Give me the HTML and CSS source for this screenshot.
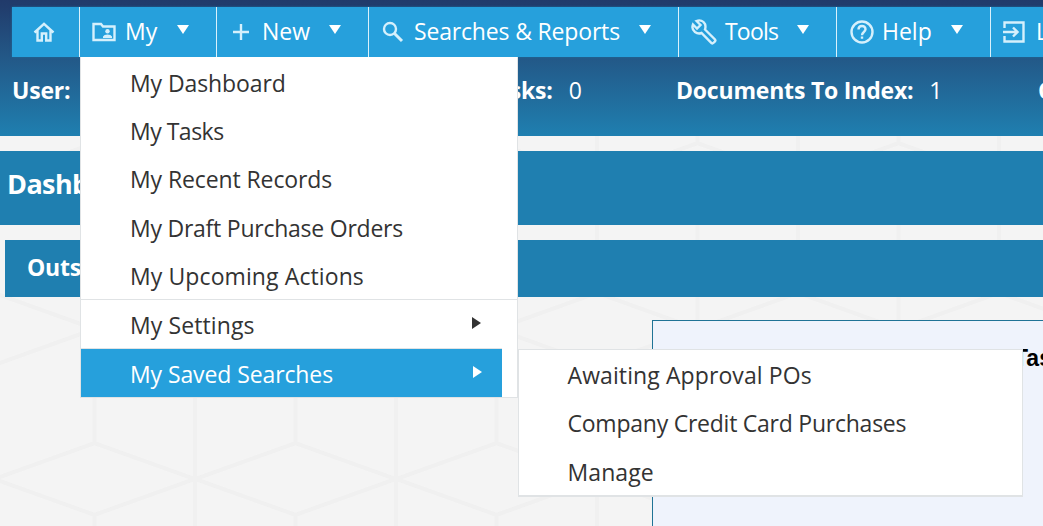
FILE: index.html
```
<!DOCTYPE html>
<html lang="en">
<head>
  <meta charset="UTF-8" />
  <meta name="viewport" content="width=device-width, initial-scale=1.0"/>
  <title>Dashboard</title>
  <link rel="stylesheet" href="styles.css">
</head>
<body>
  <!-- Cube pattern behind the page -->
  <svg class="backdrop" width="100%" height="100%">
    <defs>
      <pattern id="cubes" x="-6" y="29" width="201" height="300" patternUnits="userSpaceOnUse">
        <path d="M0 -36L100.500 0L201 -36M0 36L100.500 0L201 36M0 36V150M201 36V150M100.500 0V114M0 150L100.500 114L201 150L100.500 186ZM0 150V264M201 150V264M100.500 186V300M0 264L100.500 300L201 264"/>
      </pattern>
    </defs>
    <rect width="100%" height="100%" fill="url(#cubes)"/>
  </svg>

  <header class="header">
    <nav class="nav">
      <div class="nav-item home">
        <svg class="icon" width="22" height="20" viewBox="0 0 22 20"><path d="M1.500 10.500L11 1.800L20.500 10.500M4.500 8V18.500H8.800V11.500H13.200V18.500H17.500V8"/></svg>
      </div>
      <div class="nav-item my">
        <svg class="icon" width="24" height="20" viewBox="0 0 24 20"><path d="M1.500 2H9L11 4.500H22.500V18H1.500Z"/><circle class="solid" cx="15.500" cy="9.200" r="2.200"/><path class="solid" d="M11 16V14.500Q12 12.500 15.500 12.500T20 14.500V16Z"/></svg>
        <span class="label">My</span>
        <span class="caret"></span>

        <div class="menu">
          <div class="menu-item">My Dashboard</div>
          <div class="menu-item tighter">My Tasks</div>
          <div class="menu-item">My Recent Records</div>
          <div class="menu-item tight">My Draft Purchase Orders</div>
          <div class="menu-item wide">My Upcoming Actions</div>
          <div class="menu-item parent wide">My Settings<span class="arrow"></span></div>
          <div class="menu-item parent active">My Saved Searches<span class="arrow"></span></div>

          <div class="menu submenu">
            <div class="menu-item wide">Awaiting Approval POs</div>
            <div class="menu-item tight">Company Credit Card Purchases</div>
            <div class="menu-item wide">Manage</div>
          </div>
        </div>
      </div>
      <div class="nav-item new">
        <svg class="icon" width="18" height="18" viewBox="0 0 18 18"><path d="M9 1V17M1 9H17"/></svg>
        <span class="label">New</span>
        <span class="caret"></span>
      </div>
      <div class="nav-item searches">
        <svg class="icon" width="22" height="22" viewBox="0 0 22 22"><circle cx="8" cy="8" r="6"/><path class="thick" d="M12.500 12.500L20 20"/></svg>
        <span class="label">Searches &amp; Reports</span>
        <span class="caret"></span>
      </div>
      <div class="nav-item tools">
        <svg class="icon" width="26" height="26" viewBox="0 0 26 26"><path d="M2 5.500L6 9.500L9.500 6L5.500 2C9 .5 12.500 2 14 5C14.700 7 14.500 9 14 10.500L24 20.500Q24.800 21.500 24 22.300L22.300 24Q21.500 24.800 20.500 24L10.500 14C8.500 14.700 6 14.500 4 13C1.500 11 1 8 2 5.500Z"/></svg>
        <span class="label">Tools</span>
        <span class="caret"></span>
      </div>
      <div class="nav-item help">
        <svg class="icon" width="24" height="24" viewBox="0 0 24 24"><circle cx="12" cy="12" r="10.500"/><path d="M8.500 9.500C8.500 4.800 15.500 4.800 15.500 9.300C15.500 12 12 12 12 15.200M12 16.500V18.800"/></svg>
        <span class="label">Help</span>
        <span class="caret"></span>
      </div>
      <div class="nav-item logout">
        <svg class="icon" width="22" height="22" viewBox="0 0 22 22"><path d="M1.500 7V1.500H20.500V20.500H1.500V15M0 11H14M10 6.500L14.500 11L10 15.500"/></svg>
        <span class="label">Logout</span>
      </div>
    </nav>

    <div class="status">
      <div class="status-user"><b>User:</b></div>
      <div class="status-tasks"><b>Tasks:</b><span>0</span></div>
      <div class="status-docs"><b>Documents To Index:</b><span>1</span></div>
      <div class="status-more"><b>C</b></div>
    </div>
  </header>

  <h1 class="page-title">Dashboard</h1>
  <h2 class="section-title">Outstanding</h2>
  <div class="panel">Tasks</div>
</body>
</html>
```
FILE: styles.css
```
* {
  box-sizing: border-box;
}

body {
  margin: 0;
  height: 526px;
  overflow: hidden;
  display: flex;
  flex-direction: column;
  background-color: #f4f4f4;
  color: #fff;
  font-family: "Open Sans", "Noto Sans", sans-serif;
  font-size: 23px;
  white-space: nowrap;
}

.backdrop {
  position: absolute;
  top: 0;
  left: 0;
  z-index: -1;
}

.backdrop path {
  fill: none;
  stroke: #f0f0f0;
  stroke-width: 4;
}

.header {
  flex: none;
  height: 136px;
  padding: 7px 0 0 12px;
  background: linear-gradient(#213a6a 0, #213d6d 7px, #235887 57px, #1f7fb0 136px);
}

/* Menu bar */
.nav {
  display: flex;
  height: 50px;
  background-color: #26a0dc;
  box-shadow: 0 0 2px #1c6c9d;
}

.nav-item {
  position: relative;
  display: flex;
  flex: none;
  align-items: center;
  border-right: 1px solid #d9f1fc;
}

.home { width: 68px; padding-left: 21px; }
.my { width: 137px; padding-left: 12px; }
.new { width: 152px; padding-left: 15px; }
.searches { width: 310px; padding-left: 13px; }
.tools { width: 158px; padding-left: 12px; }
.help { width: 154px; padding-left: 13px; }

.logout {
  flex: 1;
  min-width: 0;
  padding-left: 12px;
  border-right: 0;
  overflow: hidden;
}

.icon {
  flex: none;
  fill: none;
  stroke: #d5f0fc;
  stroke-width: 2.4;
}

.icon .solid {
  fill: #d5f0fc;
  stroke: none;
}

.icon .thick {
  stroke-width: 3;
}

.label {
  line-height: 48px;
  margin-top: -2px;
}

.my .label { margin-left: 9px; }
.new .label { margin-left: 12px; }
.searches .label { margin-left: 10px; letter-spacing: -0.17px; }
.tools .label { margin-left: 8px; letter-spacing: -0.8px; }
.help .label { margin-left: 8px; }
.logout .label { margin-left: 11px; }

.caret {
  margin: -6px 27.5px 0 auto;
  border: 6px solid transparent;
  border-top: 9px solid #fff;
  border-bottom: 0;
}

/* Dropdowns */
.menu {
  position: absolute;
  top: 50px;
  left: 0;
  z-index: 2;
  width: 438px;
  padding-top: 1px;
  background-color: #fff;
  border: 1px solid #e0e3e5;
  border-top: 0;
  color: #333;
}

.menu-item {
  height: 48.2px;
  padding-left: 49px;
  line-height: 51px;
  letter-spacing: -0.1px;
}

.menu-item.tight { letter-spacing: -0.24px; }
.menu-item.tighter { letter-spacing: -0.5px; }
.menu-item.wide { letter-spacing: 0.1px; }

.menu-item.parent {
  display: flex;
  align-items: center;
  justify-content: space-between;
  height: 49px;
  padding-right: 36px;
  border-top: 1px solid #e0e3e5;
  line-height: 44px;
}

.menu-item.parent:not(.active) {
  padding-top: 3px;
}

.menu-item.active {
  width: 421px;
  padding-top: 3px;
  padding-right: 20px;
  background: #26a0dc;
  background-clip: padding-box;
  color: #fff;
}

.arrow {
  margin-top: -4px;
  border: 6px solid transparent;
  border-left: 9px solid currentColor;
  border-right: 0;
}

.submenu {
  top: 292px;
  left: 437px;
  width: 505px;
  padding: 0;
  border-top: 1px solid #e0e3e5;
  border-bottom: 2px solid #e0e3e5;
}

.submenu .menu-item {
  height: 48.3px;
  padding-left: 48.5px;
}

/* Status line */
.status {
  display: flex;
  overflow: hidden;
  line-height: 67px;
  letter-spacing: -0.2px;
}

.status div {
  flex: none;
}

.status span {
  margin-left: 16px;
}

.status .status-user { width: 471px; }
.status .status-tasks { width: 193px; }
.status .status-docs { width: 362px; }

/* Page body */
.page-title {
  flex: none;
  height: 74px;
  margin: 15px 0 0;
  padding-left: 7px;
  background-color: #1f7fb0;
  font-size: 27px;
  line-height: 66px;
  letter-spacing: -0.6px;
}

.section-title {
  flex: none;
  height: 57px;
  margin: 15px 0 0 5px;
  padding-left: 22px;
  background-color: #1f7fb0;
  font-size: 23px;
  line-height: 55px;
  letter-spacing: -0.2px;
}

.panel {
  flex: 1;
  margin: 23px 0 0 652px;
  padding: 24px 0 0 361px;
  overflow: hidden;
  background-color: #eff3fc;
  border: 1px solid #1f7396;
  border-width: 1px 0 0 1px;
  color: #000;
  font: bold 23px "Liberation Sans", Arial, sans-serif;
}
```
